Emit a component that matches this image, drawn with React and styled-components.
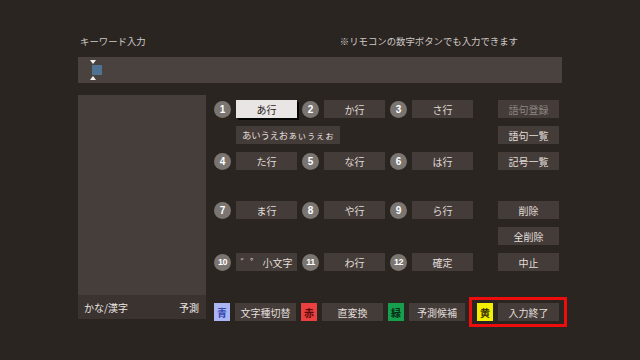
import styled, { createGlobalStyle } from "styled-components";

const GlobalStyle = createGlobalStyle`
  body {
    margin: 0;
    background: #2b2522;
    font-family: "Noto Sans CJK JP", "Noto Sans", sans-serif;
  }
`;

const Screen = styled.div`
  width: 640px;
  height: 360px;
  box-sizing: border-box;
  padding: 33px 78px 0 78px;
  background: #2b2522;
  color: #d8d4d0;
  display: flex;
  flex-direction: column;
`;

const HeaderRow = styled.div`
  display: flex;
  justify-content: space-between;
  align-items: center;
  height: 16px;
  padding: 0 44px 0 2px;
  font-size: 9.4px;
  color: #cfcac6;
`;

const InputBar = styled.div`
  margin-top: 8px;
  height: 26px;
  background: #4a423e;
  display: flex;
  align-items: center;
  padding-left: 14px;
`;

const Caret = styled.div`
  position: relative;
  width: 10px;
  height: 10px;
  background: #4f7192;

  &::before,
  &::after {
    content: "";
    position: absolute;
    left: -2px;
    border-left: 3px solid transparent;
    border-right: 3px solid transparent;
  }
  &::before {
    top: -5px;
    border-top: 4px solid #f2f2f2;
  }
  &::after {
    bottom: -5px;
    border-bottom: 4px solid #f2f2f2;
  }
`;

const Main = styled.div`
  margin-top: 12px;
  display: flex;
  gap: 8px;
`;

const SidePanel = styled.div`
  flex-shrink: 0;
  width: 128px;
  height: 224px;
  background: #463e3a;
  display: flex;
  flex-direction: column;
  justify-content: flex-end;
`;

const SideFooter = styled.div`
  height: 24px;
  background: #3a3330;
  display: flex;
  justify-content: space-between;
  align-items: center;
  padding: 0 7px 0 6px;
  font-size: 10px;
  color: #ece8e4;
`;

const Pad = styled.div`
  flex-shrink: 0;
  padding-top: 5px;
  display: flex;
  flex-direction: column;
`;

const KeyGrid = styled.div`
  display: grid;
  grid-template-columns: 83px 83px 83px 15px 61px;
  grid-template-rows: 18px 18px 18px 15px 18px 18px 18px;
  column-gap: 5px;
  row-gap: 8px;
`;

const Key = styled.div`
  display: flex;
  align-items: center;
  gap: 5px;
  grid-column: ${(p) => p.$col};
  grid-row: ${(p) => p.$row};
`;

const Num = styled.div`
  width: 17px;
  height: 17px;
  border-radius: 50%;
  background: #7b7571;
  color: #fff;
  font-family: "Liberation Sans", Arial, sans-serif;
  font-weight: bold;
  font-size: ${(p) => (p.$small ? "9px" : "10px")};
  letter-spacing: ${(p) => (p.$small ? "-0.5px" : "0")};
  display: flex;
  align-items: center;
  justify-content: center;
`;

const Button = styled.div`
  flex-shrink: 0;
  width: ${(p) => p.$w || 61}px;
  height: 18px;
  box-sizing: border-box;
  background: ${(p) => (p.$active ? "#e9e5e4" : "#443c39")};
  color: ${(p) => (p.$active ? "#1e1a18" : p.$dim ? "#8b8581" : "#e2ded9")};
  box-shadow: ${(p) => (p.$active ? "2px 2px 0 #050404" : "none")};
  font-size: 10px;
  display: flex;
  align-items: center;
  justify-content: center;
  white-space: nowrap;
`;

const Side = styled(Button)`
  grid-column: 5;
  grid-row: ${(p) => p.$row};
`;

const Wide = styled(Button)`
  grid-column: 1 / span 2;
  grid-row: 2;
  margin-left: 22px;
  font-size: 9.4px;
  letter-spacing: -0.2px;
`;

const ColorRow = styled.div`
  margin-top: 32px;
  display: flex;
  align-items: center;
  gap: 5px;
`;

const Pair = styled.div`
  display: flex;
  align-items: center;
  gap: 5px;
`;

const Highlight = styled(Pair)`
  margin-left: -1px;
  margin-top: -6px;
  margin-bottom: -6px;
  padding: 3px 5px 3px 5px;
  border: 3px solid #ee0d0d;
`;

const Swatch = styled.div`
  flex-shrink: 0;
  width: 16px;
  height: 18px;
  background: ${(p) => p.$bg};
  color: ${(p) => p.$fg};
  font-size: 10px;
  font-weight: bold;
  display: flex;
  align-items: center;
  justify-content: center;
`;

const rows = [
  { n: "1", label: "あ行", active: true, col: 1, row: 1 },
  { n: "2", label: "か行", col: 2, row: 1 },
  { n: "3", label: "さ行", col: 3, row: 1 },
  { n: "4", label: "た行", col: 1, row: 3 },
  { n: "5", label: "な行", col: 2, row: 3 },
  { n: "6", label: "は行", col: 3, row: 3 },
  { n: "7", label: "ま行", col: 1, row: 5 },
  { n: "8", label: "や行", col: 2, row: 5 },
  { n: "9", label: "ら行", col: 3, row: 5 },
  { n: "10", label: "゛゜ 小文字", col: 1, row: 7 },
  { n: "11", label: "わ行", col: 2, row: 7 },
  { n: "12", label: "確定", col: 3, row: 7 },
];

const sideButtons = [
  { label: "語句登録", row: 1, dim: true },
  { label: "語句一覧", row: 2 },
  { label: "記号一覧", row: 3 },
  { label: "削除", row: 5 },
  { label: "全削除", row: 6 },
  { label: "中止", row: 7 },
];

export default function App() {
  return (
    <Screen>
      <GlobalStyle />
      <HeaderRow>
        <span>キーワード入力</span>
        <span>※リモコンの数字ボタンでも入力できます</span>
      </HeaderRow>
      <InputBar>
        <Caret />
      </InputBar>
      <Main>
        <SidePanel>
          <SideFooter>
            <span>かな/漢字</span>
            <span>予測</span>
          </SideFooter>
        </SidePanel>
        <Pad>
          <KeyGrid>
            {rows.map((k) => (
              <Key key={k.n} $col={k.col} $row={k.row}>
                <Num $small={k.n.length > 1}>{k.n}</Num>
                <Button $active={k.active}>{k.label}</Button>
              </Key>
            ))}
            <Wide $w={104}>あいうえおぁぃぅぇぉ</Wide>
            {sideButtons.map((b) => (
              <Side key={b.label} $row={b.row} $dim={b.dim}>
                {b.label}
              </Side>
            ))}
          </KeyGrid>
          <ColorRow>
            <Pair>
              <Swatch $bg="#aab6f4" $fg="#3546b0">青</Swatch>
              <Button>文字種切替</Button>
            </Pair>
            <Pair>
              <Swatch $bg="#ea4040" $fg="#5a0a0a">赤</Swatch>
              <Button>直変換</Button>
            </Pair>
            <Pair>
              <Swatch $bg="#16a04e" $fg="#062a14">緑</Swatch>
              <Button $w={56}>予測候補</Button>
            </Pair>
            <Highlight>
              <Swatch $bg="#f2f000" $fg="#3a3500">黄</Swatch>
              <Button>入力終了</Button>
            </Highlight>
          </ColorRow>
        </Pad>
      </Main>
    </Screen>
  );
}
